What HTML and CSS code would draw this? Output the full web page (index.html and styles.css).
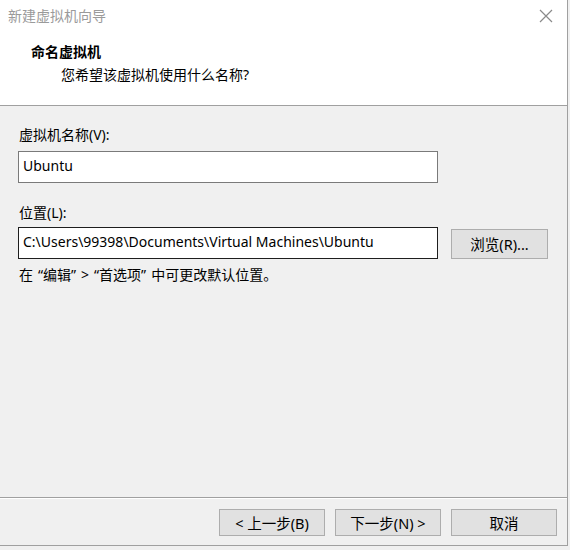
FILE: index.html
```html
<!DOCTYPE html>
<html lang="zh-CN">
<head>
<meta charset="utf-8">
<title>新建虚拟机向导</title>
<link rel="stylesheet" href="styles.css">
</head>
<body>
<div class="window">
  <div class="header">
    <div class="titlebar">
      <span class="title">新建虚拟机向导</span>
      <svg class="close" width="14" height="14" viewBox="0 0 14 14"><path d="M1 1 L13 13 M13 1 L1 13" stroke="#8a8a8a" stroke-width="1.2" fill="none"/></svg>
    </div>
    <div class="heading">命名虚拟机</div>
    <div class="subheading">您希望该虚拟机使用什么名称?</div>
  </div>
  <div class="content">
    <div class="label">虚拟机名称(V):</div>
    <div class="field">Ubuntu</div>
    <div class="label label-second">位置(L):</div>
    <div class="row">
      <div class="field field-focus">C:\Users\99398\Documents\Virtual Machines\Ubuntu</div>
      <div class="btn btn-browse">浏览(R)...</div>
    </div>
    <div class="note">在<span class="ql">“</span>编辑<span class="qr">”</span>&gt;<span class="ql">“</span>首选项<span class="qr">”</span>中可更改默认位置。</div>
  </div>
  <div class="footer">
    <div class="btn">&lt; 上一步(B)</div>
    <div class="btn">下一步(N) &gt;</div>
    <div class="btn">取消</div>
  </div>
</div>
</body>
</html>
```
FILE: styles.css
```css
html, body {
  margin: 0;
  padding: 0;
  background: #f0f0f0;
}
body {
  width: 570px;
  height: 550px;
  overflow: hidden;
  font-family: "Noto Sans", "Noto Sans CJK SC", sans-serif;
  font-size: 14px;
  color: #000;
}
.window {
  width: 567px;
  height: 545px;
  border-right: 1px solid #a0a0a0;
  border-bottom: 1px solid #a0a0a0;
  display: flex;
  flex-direction: column;
  background: #f0f0f0;
}
.header {
  height: 105px;
  background: #fff;
  border-bottom: 1px solid #a0a0a0;
  box-sizing: content-box;
}
.titlebar {
  height: 33px;
  display: flex;
  align-items: center;
  justify-content: space-between;
  padding: 0 14px 0 8px;
}
.title {
  color: #9a9a9a;
  font-size: 14px;
  line-height: 20px;
  margin-top: -2px;
}
.close {
  margin-top: -2px;
}
.heading {
  padding-left: 31px;
  font-weight: bold;
  font-size: 14px;
  line-height: 20px;
  margin-top: 9px;
}
.subheading {
  padding-left: 61px;
  font-size: 14px;
  line-height: 20px;
  margin-top: 3px;
}
.content {
  flex: 1;
  padding: 19px 0 0 18px;
  display: flex;
  flex-direction: column;
}
.label {
  line-height: 20px;
  margin-left: 1px;
}
.label-second {
  margin-top: 20px;
}
.field {
  height: 30px;
  border: 1px solid #7a7a7a;
  background: #fff;
  padding-left: 4px;
  box-sizing: content-box;
  line-height: 28px;
  margin-top: 6px;
  white-space: nowrap;
  width: 414px;
}
.field-focus {
  border-color: #1e1e1e;
  margin-top: 0;
}
.row {
  display: flex;
  align-items: center;
  gap: 13px;
  margin-top: 4px;
}
.btn {
  width: 104px;
  height: 25px;
  border: 1px solid #adadad;
  background: #e1e1e1;
  display: flex;
  align-items: center;
  justify-content: center;
  line-height: 20px;
  font-size: 14.5px;
  box-sizing: content-box;
}
.btn-browse {
  width: 95px;
  height: 28px;
  margin-top: 1px;
}
.note {
  line-height: 20px;
  margin-top: 6px;
  margin-left: 1px;
}
.ql {
  margin-left: 5px;
}
.qr {
  margin-right: 5px;
}
.footer {
  border-top: 1px solid #a0a0a0;
  box-shadow: inset 0 1px 0 #ffffff;
  padding: 11px 10px 9px 0;
  display: flex;
  justify-content: flex-end;
  gap: 10px;
}
```
